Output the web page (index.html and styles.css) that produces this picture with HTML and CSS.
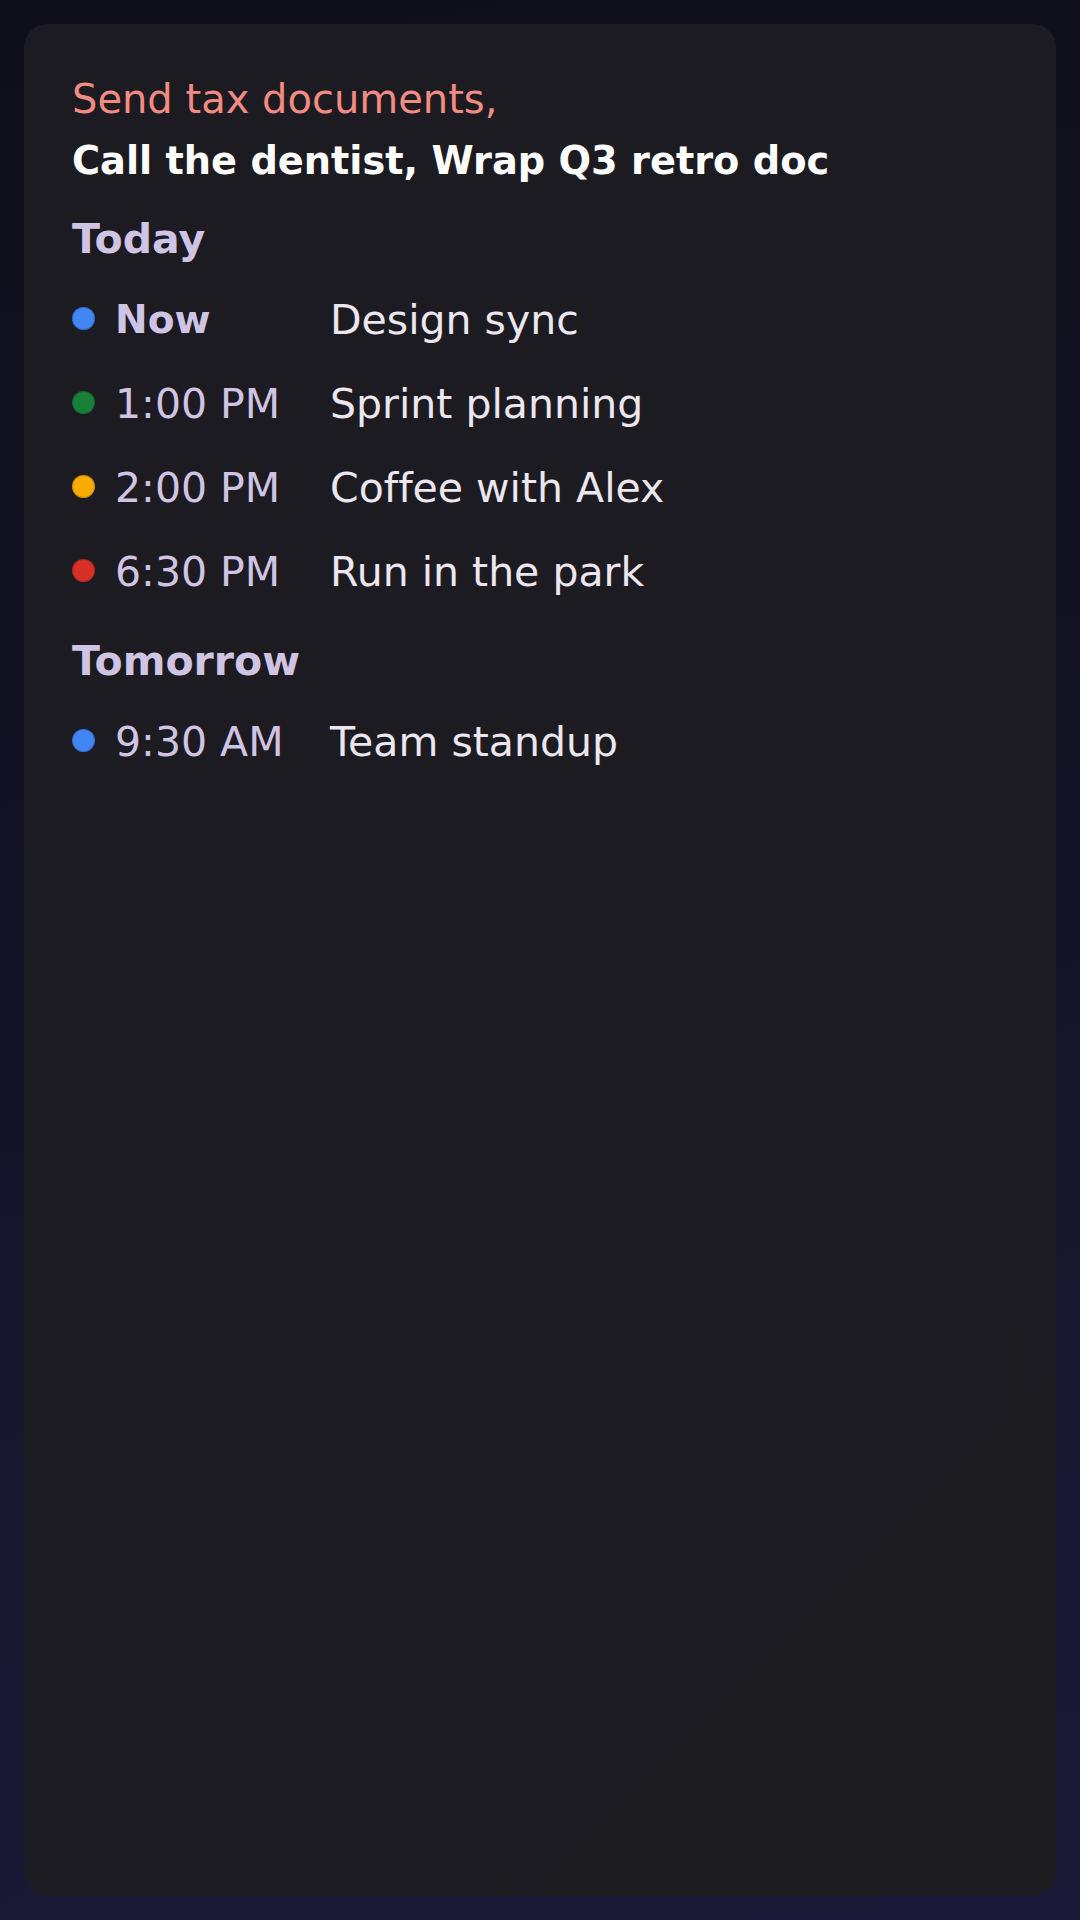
FILE: index.html
```html
<!DOCTYPE html>
<html lang="en">
<head>
    <meta charset="UTF-8">
    <meta name="viewport" content="width=device-width, initial-scale=1.0">
    <title>Agenda</title>
    <link rel="stylesheet" href="styles.css">
</head>
<body>
    <div class="card">
        <div class="tasks">
            <div class="tasks-due">Send tax documents,</div>
            <div class="tasks-rest">Call the dentist, Wrap Q3 retro doc</div>
        </div>

        <div class="day">Today</div>
        <div class="event">
            <span class="dot dot-blue"></span>
            <span class="time time-now">Now</span>
            <span class="title">Design sync</span>
        </div>
        <div class="event">
            <span class="dot dot-green"></span>
            <span class="time">1:00 PM</span>
            <span class="title">Sprint planning</span>
        </div>
        <div class="event">
            <span class="dot dot-yellow"></span>
            <span class="time">2:00 PM</span>
            <span class="title">Coffee with Alex</span>
        </div>
        <div class="event">
            <span class="dot dot-red"></span>
            <span class="time">6:30 PM</span>
            <span class="title">Run in the park</span>
        </div>

        <div class="day">Tomorrow</div>
        <div class="event">
            <span class="dot dot-blue"></span>
            <span class="time">9:30 AM</span>
            <span class="title">Team standup</span>
        </div>
    </div>
</body>
</html>
```

FILE: styles.css
```css
html, body {
    height: 100%;
}
body {
    margin: 0;
    padding: 24px;
    box-sizing: border-box;
    font-family: "DejaVu Sans", "Noto Sans", sans-serif;
    font-variant-ligatures: none;
    background: linear-gradient(170deg, #0f0f1a 0%, #141428 50%, #1a1a38 100%);
}
.card {
    height: 100%;
    box-sizing: border-box;
    padding: 44px 48px;
    border-radius: 24px;
    background: linear-gradient(135deg, #1c1b21 0%, #1d1c21 100%);
}
.tasks {
    line-height: 62px;
    margin-bottom: 2px;
}
.tasks-due {
    font-size: 40px;
    color: #f28b82;
}
.tasks-rest {
    font-size: 38.3px;
    color: #ffffff;
    font-weight: bold;
}
.day {
    margin: 16px 0 8px;
    font-size: 41px;
    font-weight: bold;
    color: #d0c4e4;
    line-height: 62px;
}
.event {
    display: flex;
    align-items: center;
    line-height: 84px;
    font-size: 41px;
}
.dot {
    width: 23px;
    height: 23px;
    border-radius: 50%;
    margin-right: 20px;
    flex-shrink: 0;
    transform: translateY(-2px);
    box-shadow: inset 0 0 0 1px rgba(0, 0, 0, 0.2);
}
.dot-blue { background: #4285f4; }
.dot-green { background: #188038; }
.dot-yellow { background: #f9ab00; }
.dot-red { background: #d93025; }
.time {
    width: 215px;
    color: #d0c4e4;
}
.time-now {
    font-size: 39px;
    font-weight: bold;
}
.title {
    color: #ebe6ef;
}
```
